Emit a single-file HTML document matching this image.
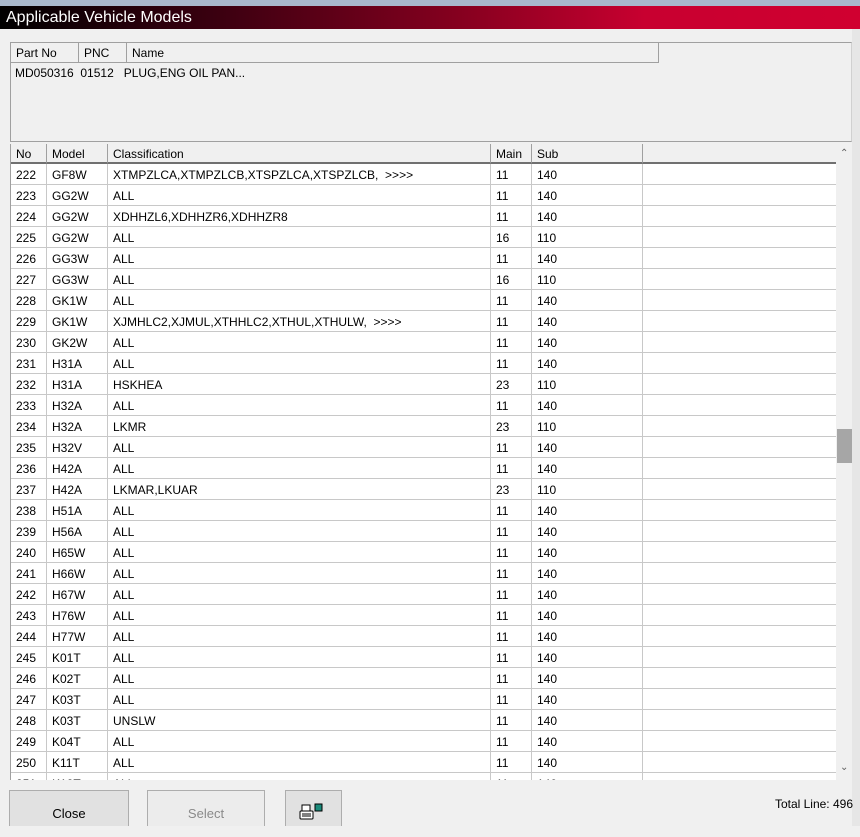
<!DOCTYPE html>
<html><head><style>
*{margin:0;padding:0;box-sizing:border-box}
body{width:860px;height:826px;background:#f0f0f0;font-family:"Liberation Sans",sans-serif;font-size:12px;color:#000;position:relative;overflow:hidden}
.top{position:absolute;left:0;top:0;width:860px;height:6px;background:#a9b8cc}
.title{position:absolute;left:0;top:6px;width:860px;height:23px;background:linear-gradient(90deg,#000 0%,#3a0010 25%,#8a0020 55%,#c80030 75%,#d00030 100%);color:#fff;font-size:16px;line-height:24px;padding-left:6px}
.rstrip{position:absolute;left:852px;top:29px;width:8px;height:797px;background:#e6e6e6}
.panel{position:absolute;left:10px;top:42px;width:842px;height:100px;border:1px solid #a0a0a0;border-right:1px solid #d0d0d0;background:#f0f0f0}
.ph{position:absolute;top:0;height:20px;border-right:1px solid #a0a0a0;border-bottom:1px solid #a0a0a0;line-height:21px;padding-left:5px;background:#f0f0f0}
.pt{position:absolute;top:23px;left:4px;font-size:12px}
.tbl{position:absolute;left:10px;top:144px;width:842px;height:636px;background:#fff;border-left:1px solid #a0a0a0;overflow:hidden}
.hd{position:absolute;top:0;height:20px;border-right:1px solid #a0a0a0;border-bottom:2px solid #707070;background:#f0f0f0;line-height:21px;padding-left:5px}
.row{position:absolute;left:0;width:825px;height:21px;border-bottom:1px solid #c8c8c8}
.c{position:absolute;top:0;height:21px;line-height:22px;padding-left:5px;border-right:1px solid #c8c8c8}
.sb{position:absolute;left:825px;top:0;width:17px;height:636px;background:#f0f0f0}
.thumb{position:absolute;left:1px;top:285px;width:15px;height:34px;background:#a6a6a6}
.btn{position:absolute;top:790px;height:36px;border:1px solid #adadad;border-bottom:none;background:#e1e1e1;text-align:center;line-height:46px;font-size:13px}
</style></head><body>
<div class="top"></div>
<div class="title">Applicable Vehicle Models</div>
<div class="rstrip"></div>
<div class="panel">
<div class="ph" style="left:0;width:68px">Part No</div>
<div class="ph" style="left:68px;width:48px">PNC</div>
<div class="ph" style="left:116px;width:532px">Name</div>
<div class="pt">MD050316 &nbsp;01512 &nbsp;&nbsp;PLUG,ENG OIL PAN...</div>
</div>
<div class="tbl">
<div class="hd" style="left:0;width:36px">No</div>
<div class="hd" style="left:36px;width:61px">Model</div>
<div class="hd" style="left:97px;width:383px">Classification</div>
<div class="hd" style="left:480px;width:41px">Main</div>
<div class="hd" style="left:521px;width:111px">Sub</div>
<div class="hd" style="left:632px;width:193px;border-right:none"></div>
<div id="rows"></div>
<div class="sb"><div style="position:absolute;left:4px;top:4px;font-size:10px;color:#606060">&#8963;</div><div class="thumb"></div><div style="position:absolute;left:4px;top:618px;font-size:10px;color:#606060">&#8964;</div></div>
</div>
<div class="btn" style="left:9px;width:120px">Close</div>
<div class="btn" style="left:147px;width:118px;color:#8a8a8a;background:#ececec">Select</div>
<div class="btn" style="left:285px;width:57px">
<svg width="24" height="20" style="position:absolute;left:13px;top:12px"><rect x="3" y="2" width="8" height="6" fill="#fff" stroke="#000"/><rect x="1" y="8" width="13" height="8" rx="1" fill="#fff" stroke="#000"/><line x1="3" y1="11" x2="12" y2="11" stroke="#000"/><line x1="3" y1="13" x2="12" y2="13" stroke="#000"/><rect x="16" y="1" width="7" height="7" fill="#1a8a7a" stroke="#000"/></svg></div>
<div style="position:absolute;right:7px;top:797px;font-size:12px">Total Line: 496</div>
<script>
var d=[["222","GF8W","XTMPZLCA,XTMPZLCB,XTSPZLCA,XTSPZLCB,  >>>>","11","140"],["223","GG2W","ALL","11","140"],["224","GG2W","XDHHZL6,XDHHZR6,XDHHZR8","11","140"],["225","GG2W","ALL","16","110"],["226","GG3W","ALL","11","140"],["227","GG3W","ALL","16","110"],["228","GK1W","ALL","11","140"],["229","GK1W","XJMHLC2,XJMUL,XTHHLC2,XTHUL,XTHULW,  >>>>","11","140"],["230","GK2W","ALL","11","140"],["231","H31A","ALL","11","140"],["232","H31A","HSKHEA","23","110"],["233","H32A","ALL","11","140"],["234","H32A","LKMR","23","110"],["235","H32V","ALL","11","140"],["236","H42A","ALL","11","140"],["237","H42A","LKMAR,LKUAR","23","110"],["238","H51A","ALL","11","140"],["239","H56A","ALL","11","140"],["240","H65W","ALL","11","140"],["241","H66W","ALL","11","140"],["242","H67W","ALL","11","140"],["243","H76W","ALL","11","140"],["244","H77W","ALL","11","140"],["245","K01T","ALL","11","140"],["246","K02T","ALL","11","140"],["247","K03T","ALL","11","140"],["248","K03T","UNSLW","11","140"],["249","K04T","ALL","11","140"],["250","K11T","ALL","11","140"],["251","K12T","ALL","11","140"]];
var h="",L=[[0,36],[36,61],[97,383],[480,41],[521,111],[632,193]];
d.forEach(function(r,i){h+='<div class="row" style="top:'+(20+i*21)+'px">';for(var j=0;j<6;j++){h+='<div class="c" style="left:'+L[j][0]+'px;width:'+L[j][1]+'px'+(j==5?';border-right:none':'')+'">'+(r[j]||"").replace(/  /g," &nbsp;")+'</div>';}h+='</div>';});
document.getElementById("rows").innerHTML=h;
</script>
</body></html>
